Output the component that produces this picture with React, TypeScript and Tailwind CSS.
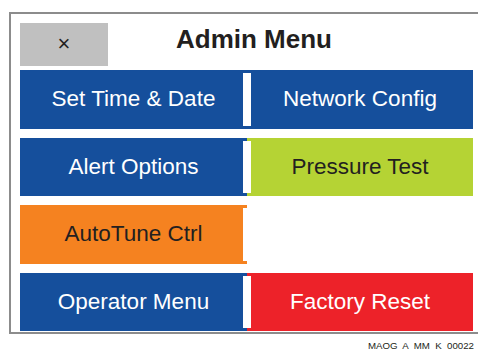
const rows = [
  [
    { label: "Set Time & Date", bg: "bg-[#154f9c]", fg: "text-white" },
    { label: "Network Config", bg: "bg-[#154f9c]", fg: "text-white" },
  ],
  [
    { label: "Alert Options", bg: "bg-[#154f9c]", fg: "text-white" },
    { label: "Pressure Test", bg: "bg-[#b5d334]", fg: "text-[#231f20]" },
  ],
  [
    { label: "AutoTune Ctrl", bg: "bg-[#f58220]", fg: "text-[#231f20]" },
    null,
  ],
  [
    { label: "Operator Menu", bg: "bg-[#154f9c]", fg: "text-white" },
    { label: "Factory Reset", bg: "bg-[#ed2229]", fg: "text-white" },
  ],
]

export default function App() {
  return (
    <div
      className="w-[478px] h-[350px] overflow-hidden bg-white text-[#231f20]"
      style={{ fontFamily: '"Liberation Sans", Arial, sans-serif' }}
    >
      {/* Frame */}
      <div className="ml-[9px] mt-[12px] w-[480px] h-[322px] border-l-2 border-y-2 border-[#8c8c8c] pl-[9px] pt-[9px]">
        {/* Header */}
        <div className="relative h-[43px] w-[453px]">
          <button className="w-[88px] h-[43px] bg-[#c0c0c0] flex items-center justify-center text-[22px] leading-none pb-[1px]">
            ×
          </button>
          <h1 className="absolute left-[156px] top-[3px] w-[156px] text-center text-[26px] font-bold leading-none whitespace-nowrap">
            Admin Menu
          </h1>
        </div>

        {/* Buttons */}
        <div className="mt-[4px] w-[453px] flex flex-col gap-[9px]">
          {rows.map((row, i) => (
            <div key={i} className="relative h-[58.5px] grid grid-cols-[227px_226px]">
              {row.map((b, j) =>
                b ? (
                  <button
                    key={j}
                    className={`${b.bg} ${b.fg} h-full flex items-center justify-center text-[22.5px] leading-none`}
                  >
                    {b.label}
                  </button>
                ) : (
                  <div key={j} />
                )
              )}
              {/* divider tab */}
              <div className="absolute left-[223px] top-[3px] bottom-[3px] w-[8px] bg-white" />
            </div>
          ))}
        </div>
      </div>

      {/* Footer code */}
      <div className="w-[474px] mt-[7px] text-right text-[9.7px] leading-none whitespace-pre">
        MAOG  A  MM  K  00022
      </div>
    </div>
  )
}
